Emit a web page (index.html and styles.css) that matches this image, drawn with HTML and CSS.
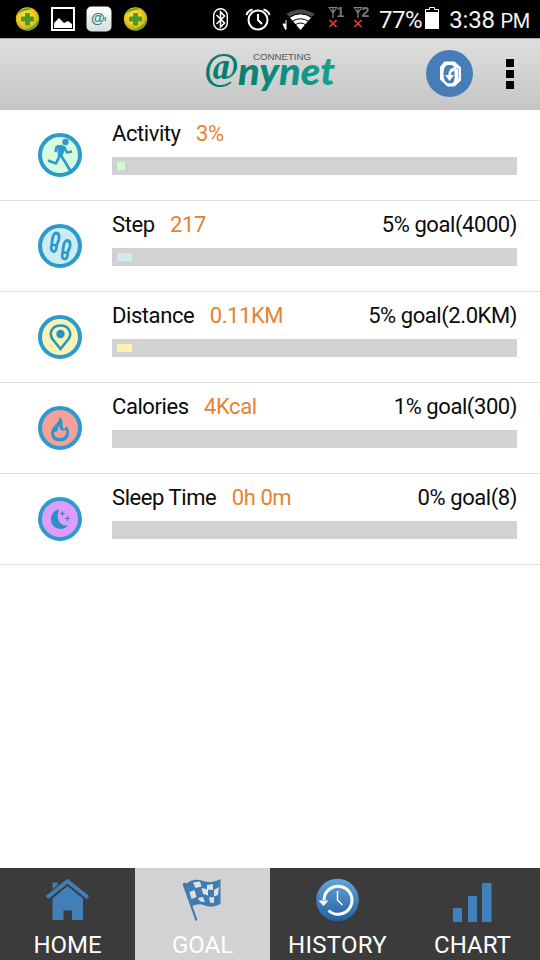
FILE: index.html
```
<!DOCTYPE html>
<html lang="en">
<head>
<meta charset="utf-8">
<title>Anynet – Goal</title>
<link rel="stylesheet" href="styles.css">
</head>
<body>
<div class="app">
  <div class="status">
    <svg class="status-icons" width="375" height="38" viewBox="0 0 375 38">
      <defs>
        <radialGradient id="ball" cx=".45" cy=".4" r=".6"><stop offset="0" stop-color="#fff04a"/><stop offset=".65" stop-color="#eec41c"/><stop offset="1" stop-color="#8faa28"/></radialGradient>
        <linearGradient id="tile" x2="0" y2="1"><stop offset="0" stop-color="#fff"/><stop offset="1" stop-color="#d9dcdc"/></linearGradient>
        <g id="shield"><circle cx="12" cy="12" r="11.700" fill="url(#ball)"/><path d="M1 8Q7-1 17 2Q6 3 1 8M23 13Q21 23 9 23Q19 21 23 13" fill="#3d9a3c"/><path d="M10 6.500h4v3.500h4v4h-4v4h-4v-4H6v-4h4z" fill="#4c9a27" stroke="#4c9a27" stroke-linejoin="round"/></g>
        <g id="antenna" fill="none" stroke="#858585" stroke-width="1.200"><path d="M0 .5h9M1 1l3.500 5L8 1M4.500 0v11"/><path d="M1 13l7 7M8 13l-7 7" stroke="#dc4038" stroke-width="1.700"/></g>
      </defs>
      <use href="#shield" x="15.500" y="7"/>
      <rect x="52" y="8" width="22" height="22" fill="none" stroke="#fff" stroke-width="2"/>
      <path d="M54 28v-5l5-5 5 5 4-2 4 3v4z" fill="#fff"/>
      <rect x="86.500" y="6.500" width="25" height="25" rx="5" fill="url(#tile)"/>
      <text x="91" y="22.500" class="tile-at">@</text>
      <path d="M105 17q1 2 0 4" fill="none" stroke="#28867a" stroke-width="1.300"/>
      <use href="#shield" x="123.500" y="7"/>
      <rect x="213.700" y="8.700" width="13.600" height="21" rx="6.800" fill="none" stroke="#fff" stroke-width="1.400"/>
      <path d="M216.500 15l8 8-4 4V12l4 4-8 8" fill="none" stroke="#fff" stroke-width="1.600"/>
      <g fill="none" stroke="#fff" stroke-width="2"><circle cx="258" cy="20" r="9.500"/><path d="M258 14v6l4 4M246.500 15q1-4 6-5.500M269.500 15q-1-4-6-5.500"/></g>
      <path d="M283 24h2.500v5.500zM286 20v9.500" fill="#fff" stroke="#fff" stroke-width="1"/>
      <path d="M300.500 30L286.500 14Q300.500 5 314.500 14z" fill="#4a4a4a"/>
      <path d="M300.500 30L290 17.500Q300.500 10.500 311 17.500z" fill="#fff"/>
      <path d="M289 17.500q11.500-7.500 23 0M292 21.500q8.500-5.500 17 0M295 25q5.500-4 11 0" fill="none" stroke="#000" stroke-width="1"/>
      <use href="#antenna" x="328.500" y="7"/><use href="#antenna" x="353.500" y="7"/>
      <text x="336.500" y="17" class="sim">1</text><text x="361.500" y="17" class="sim">2</text>
    </svg>
    <span class="battery-text">77%</span>
    <svg class="battery" width="14" height="22" viewBox="0 0 14 22"><path d="M.5 21.500V2.500h4V.5h5v2h4v19z" fill="#000" stroke="#fff"/><path d="M0 5h14v17H0z" fill="#fff"/></svg>
    <span class="clock">3:38 <small>PM</small></span>
  </div>
  <header class="header">
    <svg class="logo" width="140" height="60" viewBox="0 0 140 60" role="img" aria-label="Anynet">
      <defs><linearGradient id="teal" x2="1"><stop offset="0" stop-color="#087e70"/><stop offset="1" stop-color="#16a18e"/></linearGradient></defs>
      <text x="4" y="28.500" class="logo-at" textLength="35" lengthAdjust="spacingAndGlyphs">@</text>
      <text x="38" y="34.500" class="logo-name" textLength="97" lengthAdjust="spacingAndGlyphs">nynet</text>
      <text x="53" y="10" class="logo-small" textLength="58" lengthAdjust="spacingAndGlyphs">CONNETING</text>
    </svg>
    <svg class="sync" width="47" height="47" viewBox="0 0 47 47">
      <circle cx="23.500" cy="23.500" r="23.500" fill="#467db6"/>
      <path d="M18.500 11.500h10l6.500 6v13l-6.500 6h-7L14 29.500V17z" fill="#fff"/>
      <path d="M21.500 15h3q4 0 4 5v8q0 5.500-4.500 5.500-6.500 0-6.500-9.500 0-8 4-9z" fill="#467db6"/>
      <path d="M28.500 17.500q-6.500 1-6 7.500h-3.500l4.500 6 4.500-6h-3q-.3-3.500 3.500-4z" fill="#fff"/>
      <path d="M30 18.500h2.500v10" fill="none" stroke="#9bbbd8"/>
    </svg>
    <div class="more"><i></i><i></i><i></i></div>
  </header>
  <main class="goals">
    <section class="row">
      <svg class="badge" viewBox="0 0 44 44"><circle cx="22" cy="22" r="20" class="ring mint"/><circle cx="27.500" cy="9" r="3.200" fill="#299bcc"/><path d="M19 12l6 .5 3 1.500-4 10-4-1z" fill="#299bcc"/><path d="M22 22l-4 8.500-8-3M24 13l-5.500 1-1 5M26 14l3 5.500 5-1M23 22.500l4.500 7L33 39" class="limb"/></svg>
      <div class="info"><div class="line"><span>Activity</span><b>3%</b></div><div class="track"><div class="fill mint-bg" style="width:8px"></div></div></div>
    </section>
    <section class="row">
      <svg class="badge" viewBox="0 0 44 44"><circle cx="22" cy="22" r="20" class="ring aqua"/><g class="foot"><path id="sole" d="M18 9c4.500 0 3.500 7 1.200 10.500-1 2 0 8-3.200 8-3.400 0-3-4-2.300-7 .8-4 .3-11 4.300-11.500zM13 20.500l5 1"/><use href="#sole" x="11" y="7.500"/></g></svg>
      <div class="info"><div class="line"><span>Step</span><b>217</b><em>5% goal(4000)</em></div><div class="track"><div class="fill aqua-bg" style="width:15px"></div></div></div>
    </section>
    <section class="row">
      <svg class="badge" viewBox="0 0 44 44"><circle cx="22" cy="22" r="20" class="ring lemon"/><path d="M22.500 34L14.500 24C10.500 18 14 10.500 22.500 10.500S34.500 18 30.500 24z" fill="none" stroke="#2d94bf" stroke-width="2.600"/><circle cx="22.500" cy="19" r="4.200" fill="#2d94bf"/></svg>
      <div class="info"><div class="line"><span>Distance</span><b>0.11KM</b><em>5% goal(2.0KM)</em></div><div class="track"><div class="fill lemon-bg" style="width:15px"></div></div></div>
    </section>
    <section class="row">
      <svg class="badge" viewBox="0 0 44 44"><circle cx="22" cy="22" r="20" class="ring coral"/><path d="M21.500 10.500c1 6-8.500 10-8.500 16.500 0 5 4 8.500 9 8.500s9-3.500 9-8.500c0-3-1-5.500-3-7 0 2-1.500 3-2.500 2.500-2-1 1-7-4-12z" fill="#2f94c6"/><path d="M21 19c.5 3 1 5.500 4 5.500 1.200 0 2-.3 2.800-1 1.500 5-1.500 8.500-5.800 8.500-4 0-6.500-3-6-6 1 0 3-.5 3.500-1.500.8-1.500.5-3.500 1.500-5.500z" fill="#f5a09a"/></svg>
      <div class="info"><div class="line"><span>Calories</span><b>4Kcal</b><em>1% goal(300)</em></div><div class="track"></div></div>
    </section>
    <section class="row">
      <svg class="badge" viewBox="0 0 44 44"><circle cx="22" cy="22" r="20" class="ring violet"/><path d="M21.500 12.500C16 13 13 17.500 13 22.500c0 9 11.500 13 17.500 5.500-8 3-14-7-9-15.500zM24.500 13.500l.8 2.200 2.200.8-2.200.8-.8 2.200-.8-2.200-2.200-.8 2.200-.8zM29.500 18l.8 2.700 2.700.8-2.700.8-.8 2.700-.8-2.700-2.700-.8 2.700-.8z" fill="#2f8dc9"/></svg>
      <div class="info"><div class="line"><span>Sleep Time</span><b>0h 0m</b><em>0% goal(8)</em></div><div class="track"></div></div>
    </section>
  </main>
  <nav class="tabs">
    <a class="tab"><svg width="44" height="44" viewBox="0 0 44 44"><path d="M6.500 20.500L21.500 8l15.500 12.500V42H26V32.500h-8.500V42h-11zM6.500 4.500h5V9l-5 4.500z" fill="#427fb8"/><path d="M1 19.500L21.500 3 42 19.500" fill="none" stroke="#3b3b3b" stroke-width="6.300"/><path d="M1 19.500L21.500 3.200 42 19.500" fill="none" stroke="#427fb8" stroke-width="4"/></svg><span>HOME</span></a>
    <a class="tab active"><svg width="44" height="44" viewBox="0 0 44 44"><path d="M1.500 6q2-2 4-.5 7-6 17-2.500 9 3 17-2v25q-9 5-17 1-5-2-11 1l5 14-2 1z" fill="#427bb1"/><path d="M12 4.500l7-1 1.500 5-6 1.500zM26 7l6-1v6l-6-.5zM8.500 14l5-2 2 7-5 2zM20.500 10l6.500 1.500v6l-5-1.500zM33 12l5-3-1 8-4 1.500zM17 20l5-1 2 5-5-.5zM28 19.500l5-.5v6l-4-.5z" fill="#dce1e5"/></svg><span>GOAL</span></a>
    <a class="tab"><svg width="44" height="44" viewBox="0 0 44 44"><defs><linearGradient id="orb" x2="0" y2="1"><stop offset="0" stop-color="#65a4d8"/><stop offset="1" stop-color="#2460a0"/></linearGradient></defs><circle cx="21.500" cy="22" r="21.300" fill="url(#orb)"/><path d="M8 22a14 14 0 1 1 4.500 10.500" fill="none" stroke="#fff" stroke-width="3"/><path d="M2.500 22.500h10l-5 5.500z" fill="#fff"/><path d="M21.500 13v9l5 5" fill="none" stroke="#fff" stroke-width="1.500"/></svg><span class="wide">HISTORY</span></a>
    <a class="tab"><svg width="44" height="44" viewBox="0 0 44 44"><path d="M2 30h9v14H2zM17 18h9v26h-9zM31 5h9.500v39H31z" fill="#3f80bd"/></svg><span>CHART</span></a>
  </nav>
</div>
</body>
</html>
```
FILE: styles.css
```
* { box-sizing: border-box; }
body { margin: 0; font-family: Roboto, "Liberation Sans", sans-serif; background: #fff; }
svg { display: block; flex: none; }
.app { width: 540px; height: 960px; display: flex; flex-direction: column; overflow: hidden; }
.status { height: 38px; flex: none; display: flex; background: #000; color: #f5f5f5; font-size: 24px; line-height: 28px; white-space: nowrap; padding-right: 10px; }
.battery-text { width: 50px; padding-left: 4px; padding-top: 6px; letter-spacing: -0.5px; }
.battery { margin-top: 7px; }
.clock { margin-left: auto; padding-top: 6px; letter-spacing: -0.2px; }
.clock small { font-size: 20px; letter-spacing: -0.3px; }
.tile-at { font: bold 14px "Liberation Sans", sans-serif; fill: #28867a; }
.sim { font: bold 14px "Liberation Sans", sans-serif; fill: #777; }
.header { height: 72px; flex: none; display: flex; align-items: flex-start; background: linear-gradient(#dedede, #c5c5c5); border-top: 1px solid #aaa; padding: 11px 26px 0 200px; }
.logo { overflow: visible; }
.logo-at { font: bold 37px "Liberation Serif", serif; fill: #087e70; }
.logo-name { font: italic 900 37px Lato, sans-serif; fill: url(#teal); }
.logo-small { font: 8.5px "Liberation Sans", sans-serif; fill: #555; }
.sync { margin-left: 86px; }
.more { margin: 9px 0 0 auto; display: flex; flex-direction: column; gap: 3px; }
.more i { width: 8px; height: 8px; background: #000; }
.goals { flex: 1; }
.row { height: 91px; display: flex; border-bottom: 1px solid #dedede; padding: 11px 23px 0 38px; }
.badge { width: 44px; height: 44px; margin: 12px 30px 0 0; }
.ring { stroke: #299bcc; stroke-width: 4; }
.mint { fill: #d7fbdc; } .aqua { fill: #cdebf3; } .lemon { fill: #fbf3b5; } .coral { fill: #f5a09a; } .violet { fill: #df9cfb; }
.limb { fill: none; stroke: #299bcc; stroke-width: 2.6; stroke-linejoin: round; }
.foot { fill: none; stroke: #299bcc; stroke-width: 2.8; }
.info { flex: 1; }
.line { height: 36px; display: flex; font-size: 22px; line-height: 26px; letter-spacing: -0.43px; color: #0b0b0b; white-space: nowrap; }
.line b { font-weight: 400; color: #e8822e; margin-left: 15.5px; }
.line em { font-style: normal; margin-left: auto; }
.track { height: 18px; background: #d2d2d2; padding: 5px; }
.fill { height: 8px; }
.mint-bg { background: #d0fbd2; } .aqua-bg { background: #ceebf0; } .lemon-bg { background: #fff2b0; }
.tabs { height: 92px; flex: none; display: grid; grid-template-columns: repeat(4, 1fr); background: #3b3b3b; }
.tab { display: flex; flex-direction: column; align-items: center; padding-top: 10px; color: #fff; font-size: 24px; line-height: 28px; }
.tab svg { height: 44px; }
.tab span { margin-top: 9px; }
.tab .wide { letter-spacing: 0.25px; }
.tab.active { background: #d2d2d2; }
```
